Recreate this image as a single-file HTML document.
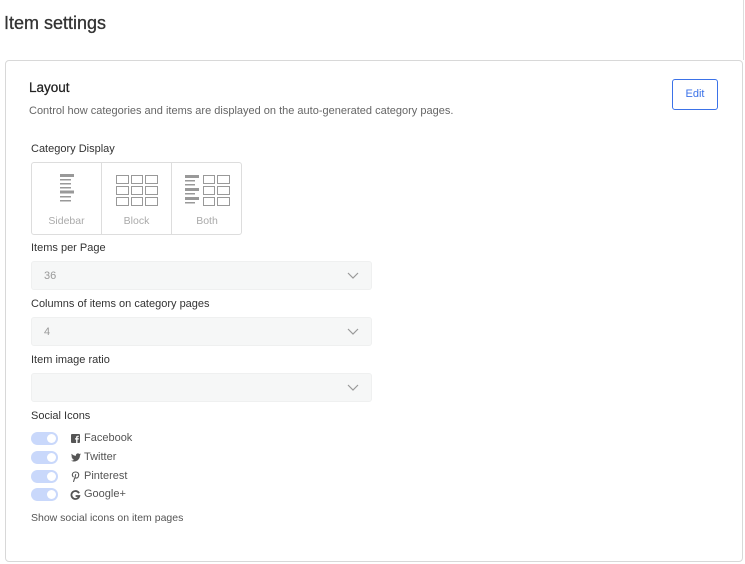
<!DOCTYPE html>
<html><head><style>
*{margin:0;padding:0;box-sizing:border-box}
body{width:745px;height:564px;background:#fff;font-family:"Liberation Sans",sans-serif;position:relative;overflow:hidden;color:#333}
.a{position:absolute;white-space:nowrap}
.lbl{font-size:11px;color:#333}
.sel{position:absolute;left:31px;width:341px;height:29px;background:#f6f7f7;border:1px solid #eff0f0;border-radius:3px;font-size:11px;color:#999;padding:8px 12px}
.sel svg{position:absolute;right:12px;top:10px}
.tog{position:absolute;left:31px;width:27px;height:13px;border-radius:7px;background:#c9d8fb}
.tog::after{content:"";position:absolute;right:2px;top:2px;width:9px;height:9px;border-radius:50%;background:#fff}
.soc{font-size:11px;color:#555}
.cell{position:absolute;top:0;width:70px;height:72px;border-right:1px solid #ddd}
.cell span{position:absolute;bottom:8px;left:0;right:0;text-align:center;font-size:10.5px;color:#aaa}
</style></head><body>
<div style="position:absolute;left:743px;top:0;width:1px;height:60px;background:#ddd"></div>
<div class="a" style="left:4px;top:13px;font-size:18px;color:#333;-webkit-text-stroke:0.3px #333">Item settings</div>
<div style="position:absolute;left:5px;top:60px;width:738px;height:502px;border:1px solid #d8d8d8;border-radius:4px"></div>
<div class="a" style="left:29px;top:80px;font-size:13.5px;color:#222;-webkit-text-stroke:0.25px #222">Layout</div>
<div class="a" style="left:29px;top:105px;font-size:11px;color:#666">Control how categories and items are displayed on the auto-generated category pages.</div>
<div style="position:absolute;left:672px;top:79px;width:46px;height:31px;border:1px solid #3b72e8;border-radius:3px;color:#3b72e8;font-size:11px;text-align:center;line-height:29px">Edit</div>
<div class="a lbl" style="left:31px;top:143px">Category Display</div>
<div style="position:absolute;left:31px;top:162px;width:211px;height:73px;border:1px solid #ddd;border-radius:3px;overflow:hidden">
 <div class="cell" style="left:0">
  <svg style="position:absolute;left:28px;top:11px" width="14" height="30" fill="#999"><rect x="0" y="0" width="14" height="3"/><rect x="0" y="5" width="11" height="1.5"/><rect x="0" y="9" width="11" height="1.5"/><rect x="0" y="13" width="11" height="1.5"/><rect x="0" y="16.5" width="14" height="3"/><rect x="0" y="22" width="11" height="1.5"/><rect x="0" y="26" width="11" height="1.5"/></svg>
  <span>Sidebar</span></div>
 <div class="cell" style="left:70px">
  <svg style="position:absolute;left:14px;top:12px" width="42" height="31" fill="none" stroke="#999" stroke-width="1"><rect x=".5" y=".5" width="12" height="8"/><rect x="15.5" y=".5" width="11" height="8"/><rect x="29.5" y=".5" width="12" height="8"/><rect x=".5" y="11.5" width="12" height="8"/><rect x="15.5" y="11.5" width="11" height="8"/><rect x="29.5" y="11.5" width="12" height="8"/><rect x=".5" y="22.5" width="12" height="8"/><rect x="15.5" y="22.5" width="11" height="8"/><rect x="29.5" y="22.5" width="12" height="8"/></svg>
  <span>Block</span></div>
 <div class="cell" style="left:140px;border-right:none">
  <svg style="position:absolute;left:13px;top:12px" width="46" height="31"><g fill="#999"><rect x="0" y="0" width="14" height="3"/><rect x="0" y="5" width="10" height="1.5"/><rect x="0" y="9" width="10" height="1.5"/><rect x="0" y="13" width="14" height="3"/><rect x="0" y="18" width="10" height="1.5"/><rect x="0" y="22" width="14" height="3"/><rect x="0" y="27" width="10" height="1.5"/></g><g fill="none" stroke="#999"><rect x="18.5" y=".5" width="11" height="8"/><rect x="32.5" y=".5" width="12" height="8"/><rect x="18.5" y="11.5" width="11" height="8"/><rect x="32.5" y="11.5" width="12" height="8"/><rect x="18.5" y="22.5" width="11" height="8"/><rect x="32.5" y="22.5" width="12" height="8"/></g></svg>
  <span>Both</span></div>
</div>
<div class="a lbl" style="left:31px;top:242px">Items per Page</div>
<div class="sel" style="top:261px">36<svg width="12" height="8"><path d="M1 1l5 5 5-5" fill="none" stroke="#999" stroke-width="1.2"/></svg></div>
<div class="a lbl" style="left:31px;top:298px">Columns of items on category pages</div>
<div class="sel" style="top:317px">4<svg width="12" height="8"><path d="M1 1l5 5 5-5" fill="none" stroke="#999" stroke-width="1.2"/></svg></div>
<div class="a lbl" style="left:31px;top:354px">Item image ratio</div>
<div class="sel" style="top:373px"><svg width="12" height="8"><path d="M1 1l5 5 5-5" fill="none" stroke="#999" stroke-width="1.2"/></svg></div>
<div class="a lbl" style="left:31px;top:410px">Social Icons</div>
<div class="tog" style="top:432px"></div>
<div class="tog" style="top:451px"></div>
<div class="tog" style="top:470px"></div>
<div class="tog" style="top:488px"></div>
<svg class="a" style="left:71px;top:434px" width="9" height="9"><rect width="9" height="9" rx="1" fill="#555"/><path d="M6.5 9V5.5h1.2l.2-1.3H6.5v-.8c0-.4.1-.6.6-.6h.8V1.7H6.8c-1.1 0-1.7.6-1.7 1.6v.9H4v1.3h1.1V9z" fill="#fff"/></svg>
<div class="a soc" style="left:84px;top:432px">Facebook</div>
<svg class="a" style="left:71px;top:453px" width="10" height="9" viewBox="0 0 24 20"><path fill="#555" d="M24 2.4c-.9.4-1.8.7-2.8.8 1-.6 1.8-1.6 2.2-2.7-1 .6-2 1-3.1 1.2C19.4.7 18.1 0 16.6 0c-2.7 0-4.9 2.2-4.9 4.9 0 .4 0 .8.1 1.1C7.7 5.8 4.1 3.9 1.7.9c-.4.7-.7 1.6-.7 2.5 0 1.7.9 3.2 2.2 4.1-.8 0-1.6-.2-2.2-.6v.1c0 2.4 1.7 4.4 3.9 4.8-.4.1-.8.2-1.3.2-.3 0-.6 0-.9-.1.6 2 2.4 3.4 4.6 3.4-1.7 1.3-3.8 2.1-6.1 2.1H0c2.2 1.4 4.8 2.2 7.5 2.2 9.1 0 14-7.5 14-14v-.6c1-.7 1.8-1.6 2.5-2.6z"/></svg>
<div class="a soc" style="left:84px;top:451px">Twitter</div>
<svg class="a" style="left:71px;top:471px" width="9" height="11" viewBox="0 0 9 11"><path d="M2.2 5.8C1.5 5.2 1.3 4.5 1.3 3.9 1.3 2.1 2.8 1 4.6 1 6.5 1 7.7 2.2 7.7 3.8c0 1.8-1 3.3-2.5 3.3-.8 0-1.3-.5-1.1-1.2L4.7 3.5M3.6 7.2L2.6 10.5" fill="none" stroke="#555" stroke-width="1.1" stroke-linecap="round"/></svg>
<div class="a soc" style="left:84px;top:470px">Pinterest</div>
<svg class="a" style="left:70px;top:490px" width="11" height="11" viewBox="0 0 11 11"><path d="M9 3.2A4 4 0 1 0 9.3 6H5.6" fill="none" stroke="#555" stroke-width="1.8"/></svg>
<div class="a soc" style="left:84px;top:488px">Google+</div>
<div class="a" style="left:31px;top:512px;font-size:10.5px;color:#555">Show social icons on item pages</div>
</body></html>
